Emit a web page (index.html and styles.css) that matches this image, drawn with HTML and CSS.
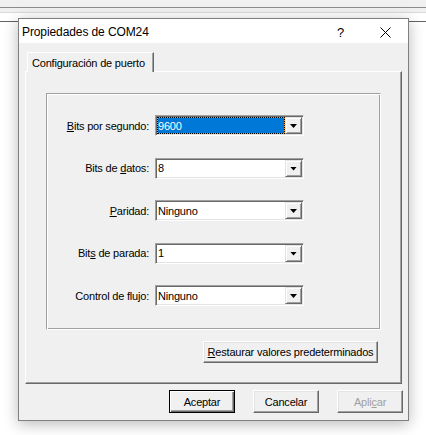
FILE: index.html
```html
<!DOCTYPE html>
<html lang="es">
<head>
<meta charset="utf-8">
<title>Propiedades de COM24</title>
<link rel="stylesheet" href="styles.css">
</head>
<body>
<div class="desk">
  <div class="bg-strip"></div>
  <div class="dialog">
    <div class="titlebar">
      <span class="title">Propiedades de COM24</span>
      <div class="tb-btn help">?</div>
      <div class="tb-btn close">
        <svg width="11" height="11" viewBox="0 0 11 11"><path d="M0.5 0.5 L10.5 10.5 M10.5 0.5 L0.5 10.5" stroke="#000" stroke-width="1" fill="none"/></svg>
      </div>
    </div>
    <div class="body">
      <div class="tabs"><div class="tab">Configuración de puerto</div></div>
      <div class="panel">
        <div class="group">
          <div class="lbl"><span><u>B</u>its por segundo:</span></div>
          <div class="combo"><span class="val"><span class="sel">9600</span></span><span class="drop"></span></div>
          <div class="lbl"><span>Bits de <u>d</u>atos:</span></div>
          <div class="combo"><span class="val">8</span><span class="drop"></span></div>
          <div class="lbl"><span><u>P</u>aridad:</span></div>
          <div class="combo"><span class="val">Ninguno</span><span class="drop"></span></div>
          <div class="lbl"><span>Bit<u>s</u> de parada:</span></div>
          <div class="combo"><span class="val">1</span><span class="drop"></span></div>
          <div class="lbl"><span>Control de flu<u>j</u>o:</span></div>
          <div class="combo"><span class="val">Ninguno</span><span class="drop"></span></div>
        </div>
        <div class="restore-row"><div class="btn wide"><span><u>R</u>estaurar valores predeterminados</span></div></div>
      </div>
      <div class="actions">
        <div class="btn default"><span>Aceptar</span></div>
        <div class="btn"><span>Cancelar</span></div>
        <div class="btn disabled"><span>Apli<u>c</u>ar</span></div>
      </div>
    </div>
  </div>
</div>
</body>
</html>
```

FILE: styles.css
```css
html, body {
  margin: 0;
  padding: 0;
  background: #fff;
}
body {
  width: 426px;
  height: 435px;
  overflow: hidden;
  font-family: "Liberation Sans", Arial, sans-serif;
  font-size: 11px;
  letter-spacing: -0.2px;
  color: #000;
}
.desk {
  position: relative;
  width: 426px;
  height: 435px;
}
.bg-strip {
  height: 22px;
  background: linear-gradient(to bottom,
    #f0f0f0 0, #f0f0f0 7px,
    #8c8c8c 7px, #8c8c8c 8px,
    #f0f0f0 8px, #f0f0f0 12px,
    #d9d9d9 12px, #d9d9d9 13px,
    #ffffff 13px, #ffffff 21px,
    #646464 21px, #646464 22px);
}
.dialog {
  position: absolute;
  left: 18px;
  top: 18px;
  width: 391px;
  height: 403px;
  box-sizing: border-box;
  border: 1px solid #808080;
  background: #f0f0f0;
  box-shadow: 0 3px 14px rgba(0, 0, 0, 0.28);
  display: flex;
  flex-direction: column;
}
.titlebar {
  height: 24px;
  background: #fff;
  display: flex;
  align-items: center;
  flex: none;
}
.title {
  flex: 1;
  padding-left: 3px;
  font-size: 12px;
  letter-spacing: -0.1px;
  padding-top: 1px;
}
.tb-btn {
  width: 45px;
  height: 24px;
  display: flex;
  align-items: center;
  justify-content: center;
}
.help {
  font-size: 13px;
  padding-top: 2px;
  box-sizing: border-box;
}
.close svg {
  margin-top: 2px;
  display: block;
}
.body {
  flex: 1;
  padding: 9px 6px 0;
  display: flex;
  flex-direction: column;
}
.tabs {
  display: flex;
  height: 19px;
  padding-left: 2px;
  position: relative;
  z-index: 1;
}
.tab {
  width: 127px;
  height: 20px;
  box-sizing: border-box;
  border-top: 1px solid #fff;
  border-left: 1px solid #fff;
  border-right: 1px solid #696969;
  box-shadow: inset -1px 0 #a0a0a0;
  background: #f0f0f0;
  padding: 4px 0 0 4px;
  white-space: nowrap;
}
.panel {
  height: 313px;
  box-sizing: border-box;
  border: 1px solid;
  border-color: #fff #696969 #696969 #fff;
  box-shadow: inset -1px -1px #a0a0a0;
  padding: 21px 20px 20px 20px;
  display: flex;
  flex-direction: column;
}
.group {
  height: 237px;
  box-sizing: border-box;
  border: 1px solid;
  border-color: #a0a0a0 #fff #fff #a0a0a0;
  box-shadow: inset 1px 1px #fff, inset -1px -1px #a0a0a0;
  display: grid;
  grid-template-columns: 102px 149px;
  column-gap: 6px;
  grid-auto-rows: 21px;
  row-gap: 21.5px;
  padding-top: 21px;
  align-content: start;
}
.lbl {
  display: flex;
  align-items: center;
  justify-content: flex-end;
  white-space: nowrap;
}
.combo {
  box-sizing: border-box;
  height: 21px;
  border: 1px solid;
  border-color: #a0a0a0 #fff #fff #a0a0a0;
  box-shadow: inset 1px 1px #696969, inset -1px -1px #e3e3e3;
  background: #fff;
  padding: 1px;
  display: flex;
}
.val {
  flex: 1;
  display: flex;
  align-items: center;
  padding-left: 1px;
}
.sel {
  flex: 1;
  align-self: stretch;
  display: flex;
  align-items: center;
  margin-left: -1px;
  color: #fff;
  box-sizing: border-box;
  border: 1px dotted #000;
  background: linear-gradient(#0078d7, #0078d7) padding-box, #f7902a border-box;
}
.drop {
  width: 17px;
  height: 17px;
  box-sizing: border-box;
  border: 1px solid;
  border-color: #e3e3e3 #696969 #696969 #e3e3e3;
  box-shadow: inset 1px 1px #fff, inset -1px -1px #a0a0a0;
  background: #f0f0f0;
  display: flex;
  align-items: center;
  justify-content: center;
  flex: none;
}
.drop::after {
  content: "";
  width: 7px;
  height: 4px;
  background: #000;
  clip-path: polygon(0 0, 100% 0, 50% 100%);
  margin-top: 1px;
}
.restore-row {
  display: flex;
  justify-content: flex-end;
  margin-top: 11px;
  padding-right: 3px;
}
.btn {
  box-sizing: border-box;
  width: 66px;
  height: 23px;
  border: 1px solid;
  border-color: #fff #696969 #696969 #fff;
  box-shadow: inset -1px -1px #a0a0a0, inset 1px 1px #e3e3e3;
  background: #f0f0f0;
  display: flex;
  align-items: center;
  justify-content: center;
  white-space: nowrap;
}
.btn.wide {
  width: 175px;
  height: 22px;
}
.btn.default {
  border: 1px solid #000;
  box-shadow: inset 1px 1px #fff, inset -1px -1px #696969, inset -2px -2px #a0a0a0;
}
.btn.disabled {
  color: #a0a0a0;
}
.actions {
  display: flex;
  justify-content: flex-end;
  gap: 18px;
  margin-top: 6px;
  margin-right: -1px;
}
u {
  text-decoration: underline;
  text-underline-offset: 1px;
}
```
